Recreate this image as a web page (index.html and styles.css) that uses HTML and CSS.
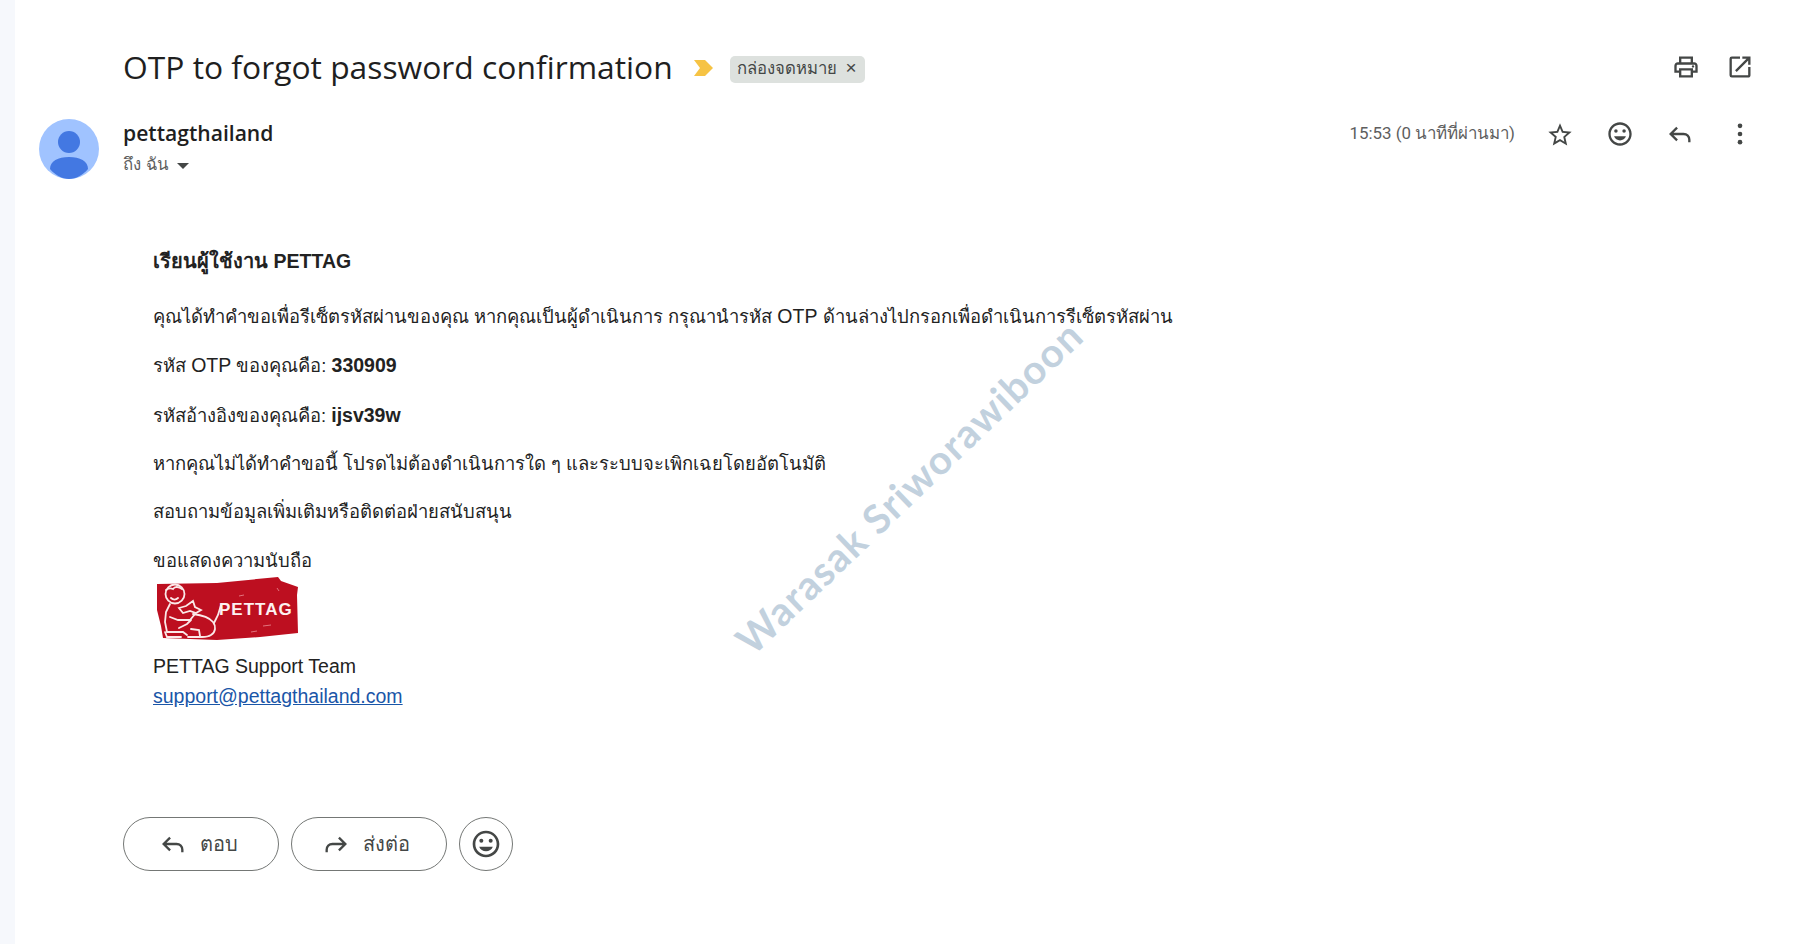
FILE: index.html
```html
<!DOCTYPE html>
<html lang="th">
<head>
    <meta charset="UTF-8">
    <meta name="viewport" content="width=device-width, initial-scale=1.0">
    <title>OTP to forgot password confirmation</title>
    <link rel="stylesheet" href="styles.css">
</head>
<body>
    <svg class="icon-defs" width="0" height="0">
        <symbol id="i-print" viewBox="0 0 24 24"><path d="M19 8h-1V3H6v5H5c-1.66 0-3 1.34-3 3v6h4v4h12v-4h4v-6c0-1.66-1.34-3-3-3zM8 5h8v3H8V5zm8 12v2H8v-4h8v2zm2-2v-2H6v2H4v-4c0-.55.45-1 1-1h14c.55 0 1 .45 1 1v4h-2z"/><circle cx="18" cy="11.5" r="1"/></symbol>
        <symbol id="i-open" viewBox="0 0 24 24"><path d="M19 19H5V5h7V3H5a2 2 0 0 0-2 2v14a2 2 0 0 0 2 2h14c1.1 0 2-.9 2-2v-7h-2v7zM14 3v2h3.59l-9.83 9.83 1.41 1.41L19 6.41V10h2V3h-7z"/></symbol>
        <symbol id="i-star" viewBox="0 0 24 24"><path d="M22 9.24l-7.19-.62L12 2 9.19 8.63 2 9.24l5.46 4.73L5.82 21 12 17.27 18.18 21l-1.63-7.03L22 9.24zM12 15.4l-3.76 2.27 1-4.28-3.32-2.88 4.38-.38L12 6.1l1.71 4.04 4.38.38-3.32 2.88 1 4.28L12 15.4z"/></symbol>
        <symbol id="i-smile" viewBox="0 0 24 24"><path d="M11.99 2C6.47 2 2 6.48 2 12s4.47 10 9.99 10C17.52 22 22 17.52 22 12S17.52 2 11.99 2zM12 20c-4.42 0-8-3.58-8-8s3.58-8 8-8 8 3.58 8 8-3.58 8-8 8z"/><circle cx="15.5" cy="9.5" r="1.5"/><circle cx="8.5" cy="9.5" r="1.5"/><path d="M12 17.5c2.33 0 4.31-1.46 5.11-3.5H6.89c.8 2.04 2.78 3.5 5.11 3.5z"/></symbol>
        <symbol id="i-reply" viewBox="0 0 24 24"><path d="M9.5 6.5 4 12l5.5 5.5M4.5 12H15c3 0 5 2 5 5v2" fill="none" stroke="currentColor" stroke-width="2"/></symbol>
        <symbol id="i-forward" viewBox="0 0 24 24"><path d="M14.5 6.5 20 12l-5.5 5.5M19.5 12H9c-3 0-5 2-5 5v2" fill="none" stroke="currentColor" stroke-width="2"/></symbol>
        <symbol id="i-more" viewBox="0 0 24 24"><circle cx="12" cy="5" r="2"/><circle cx="12" cy="12" r="2"/><circle cx="12" cy="19" r="2"/></symbol>
    </svg>

    <div class="mail">
        <div class="subject-row">
            <h1 class="subject">OTP to forgot password confirmation</h1>
            <svg class="marker" viewBox="0 0 20 16"><path d="M0 0h11l8 8-8 8H0l6-8z"/></svg>
            <span class="label">กล่องจดหมาย <span class="label-x">×</span></span>
            <div class="subject-actions">
                <svg class="icon"><use href="#i-print"/></svg>
                <svg class="icon"><use href="#i-open"/></svg>
            </div>
        </div>

        <div class="sender-row">
            <svg class="avatar" viewBox="0 0 60 60">
                <circle cx="30" cy="30" r="30" fill="#a0c3ff"/>
                <circle cx="30" cy="23" r="11" fill="#4378e2"/>
                <path d="M11 50c0-8 8-12 19-12s19 4 19 12c-5 6-12 10-19 10s-14-4-19-10z" fill="#4378e2"/>
            </svg>
            <div class="sender-info">
                <div class="sender-name">pettagthailand</div>
                <div class="sender-to">ถึง ฉัน <span class="caret"></span></div>
            </div>
            <div class="sender-actions">
                <span class="time">15:53 (0 นาทีที่ผ่านมา)</span>
                <svg class="icon icon-star"><use href="#i-star"/></svg>
                <svg class="icon"><use href="#i-smile"/></svg>
                <svg class="icon"><use href="#i-reply"/></svg>
                <svg class="icon"><use href="#i-more"/></svg>
            </div>
        </div>

        <div class="mail-body">
            <p class="greeting"><b>เรียนผู้ใช้งาน <span class="latin">PETTAG</span></b></p>
            <p>คุณได้ทำคำขอเพื่อรีเซ็ตรหัสผ่านของคุณ หากคุณเป็นผู้ดำเนินการ กรุณานำรหัส <span class="latin">OTP</span> ด้านล่างไปกรอกเพื่อดำเนินการรีเซ็ตรหัสผ่าน</p>
            <p>รหัส <span class="latin">OTP</span> ของคุณคือ: <b class="latin">330909</b></p>
            <p>รหัสอ้างอิงของคุณคือ: <b class="latin">ijsv39w</b></p>
            <p>หากคุณไม่ได้ทำคำขอนี้ โปรดไม่ต้องดำเนินการใด ๆ และระบบจะเพิกเฉยโดยอัตโนมัติ</p>
            <p>สอบถามข้อมูลเพิ่มเติมหรือติดต่อฝ่ายสนับสนุน</p>
            <p class="sign-off">ขอแสดงความนับถือ</p>
            <svg class="logo" viewBox="0 0 146 66">
                <path d="M2 8 62 7l61-6 3 4 17 6-1 8 1 38-38 4-43 3-54-2-2-12-4-16z" fill="#bd0f20"/>
                <g fill="none" stroke="#fbe9e9" stroke-width="1.8" stroke-linecap="round">
                    <circle cx="20" cy="18" r="9.5"/>
                    <path d="M11 14c3-2 5-2 7-1 2-3 6-2 9 0"/>
                    <path d="M16 22c2 2 5 2 7 0"/>
                    <path d="M15 28l-4 8-1 10 2 10h16l4 3"/>
                    <path d="M10 56l2 5h14"/>
                    <path d="M15 41l8 3h12l5-6"/>
                    <path d="M24 32l7-2 7-5 2 6 6 3-5 3-6-2-7 2z"/>
                    <path d="M38 38c8 1 16 3 20 8 3 4 3 10-2 13-3 2-6 2-9 2H33"/>
                    <path d="M24 52l8-4 4-4"/>
                    <path d="M36 53l8 1 1 6"/>
                    <path d="M59 47l4-8 3-10"/>
                </g>
                <text x="64" y="39" class="logo-text">PETTAG</text>
                <path d="M108 50l8-1M96 56l6-1M122 12l2 3M84 20l5-1" stroke="#e2737d" stroke-width="1" fill="none"/>
            </svg>
            <div class="signature latin">PETTAG Support Team</div>
            <a class="signature-link latin" href="#">support@pettagthailand.com</a>
        </div>

        <div class="reply-row">
            <button class="pill"><svg class="icon"><use href="#i-reply"/></svg>ตอบ</button>
            <button class="pill"><svg class="icon"><use href="#i-forward"/></svg>ส่งต่อ</button>
            <button class="pill-round"><svg class="icon"><use href="#i-smile"/></svg></button>
        </div>
    </div>

    <div class="watermark">Warasak Sriworawiboon</div>
</body>
</html>
```
FILE: styles.css
```css
html, body {
    height: 100%;
}
body {
    margin: 0;
    background-color: #f6f8fc;
    font-family: "Liberation Sans", "Noto Sans", sans-serif;
    color: #222;
    overflow: hidden;
}
.icon-defs {
    position: absolute;
}
.mail {
    margin-left: 15px;
    height: 100%;
    background-color: white;
    padding: 43px 0 0 0;
    box-sizing: border-box;
}
.icon {
    width: 28px;
    height: 28px;
    fill: #444746;
    color: #444746;
}

/* subject */
.subject-row {
    display: flex;
    align-items: center;
    height: 48px;
    padding-left: 108px;
    padding-right: 45px;
}
.subject {
    margin: 0 0 2px;
    font-family: "Open Sans", sans-serif;
    font-weight: 400;
    font-size: 31.8px;
    color: #1f1f1f;
}
.marker {
    width: 20px;
    height: 16px;
    margin-left: 21px;
    margin-top: 2px;
    fill: #f6c344;
}
.label {
    margin-left: 16px;
    margin-top: 4px;
    padding: 2px 8px 3px 7px;
    background-color: #dde1de;
    border-radius: 5px;
    font-size: 16.7px;
    line-height: 22px;
    color: #444746;
}
.label-x {
    margin-left: 4px;
    font-size: 19px;
    line-height: 16px;
}
.subject-actions {
    margin-left: auto;
    display: flex;
    gap: 26px;
}

/* sender */
.sender-row {
    display: flex;
    margin-top: 28px;
    padding-left: 24px;
    padding-right: 45px;
}
.avatar {
    width: 60px;
    height: 60px;
    flex-shrink: 0;
}
.sender-info {
    margin-left: 24px;
}
.sender-name {
    font-family: "Open Sans", sans-serif;
    font-weight: 600;
    font-size: 21.1px;
    line-height: 28px;
    color: #1f1f1f;
}
.sender-to {
    margin-top: 4px;
    font-size: 16.8px;
    color: #5e5e5e;
}
.caret {
    display: inline-block;
    margin-left: 5px;
    border-left: 6px solid transparent;
    border-right: 6px solid transparent;
    border-top: 6px solid #444746;
    vertical-align: middle;
}
.sender-actions {
    margin-left: auto;
    display: flex;
    align-items: center;
    gap: 32px;
    height: 30px;
}
.time {
    margin-right: -1px;
    margin-top: -2px;
    font-family: "Roboto", sans-serif;
    font-size: 16.9px;
    color: #5e5e5e;
}
.icon-star {
    margin-top: 2px;
}

/* body of the mail */
.mail-body {
    margin-top: 70px;
    padding-left: 138px;
    font-size: 18.4px;
    line-height: 24px;
    color: #222;
}
.latin {
    font-size: 19.5px;
}
.mail-body p {
    margin: 0 0 24.3px;
}
.mail-body .greeting {
    margin-bottom: 31.2px;
    font-size: 20px;
}
.mail-body .sign-off {
    margin-bottom: 3px;
}
.logo {
    display: block;
    width: 146px;
    height: 66px;
    margin-left: 2px;
    margin-bottom: 12px;
}
.logo-text {
    font-family: "Liberation Sans", sans-serif;
    font-weight: 700;
    font-size: 17px;
    letter-spacing: 1px;
    fill: #fdf1f1;
}
.signature {
    line-height: 24px;
    margin-bottom: 6px;
}
.signature-link {
    color: #1a56a8;
}

/* reply buttons */
.reply-row {
    display: flex;
    gap: 12px;
    margin-top: 108px;
    margin-left: 108px;
}
.pill, .pill-round {
    display: flex;
    align-items: center;
    justify-content: center;
    height: 54px;
    background-color: white;
    border: 1px solid #747775;
    border-radius: 27px;
    font-family: "Noto Sans", sans-serif;
    font-size: 20px;
    font-weight: 500;
    color: #444746;
}
.pill {
    width: 156px;
    gap: 13px;
    padding: 0 6px 0 0;
}
.pill-round {
    width: 54px;
    padding: 0;
}
.pill-round .icon {
    width: 32px;
    height: 32px;
}

/* watermark over the mail */
.watermark {
    position: absolute;
    left: 909px;
    top: 487px;
    transform: translate(-50%, -50%) rotate(-43.7deg);
    font-family: "Lato", sans-serif;
    font-weight: 700;
    font-size: 40px;
    letter-spacing: 1.3px;
    white-space: nowrap;
    color: #c2d1de;
}
```
